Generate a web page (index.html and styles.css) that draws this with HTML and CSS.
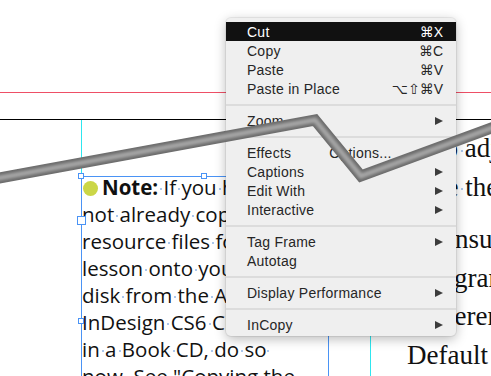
FILE: index.html
```html
<!DOCTYPE html>
<html lang="en">
<head>
    <meta charset="UTF-8">
    <meta name="viewport" content="width=device-width, initial-scale=1.0">
    <title>Layout - Context Menu</title>
    <link rel="stylesheet" href="styles.css">
</head>
<body>
    <div class="page">
        <div class="guide guide-bleed"></div>
        <div class="guide guide-margin"></div>
        <div class="guide guide-col-a"></div>
        <div class="guide guide-col-b"></div>

        <div class="frame note-frame">
            <div class="story">
                <div><span class="bullet"></span><b>Note:</b><span class="sp"> </span>If<span class="sp"> </span>you<span class="sp"> </span>have</div>
                <div>not<span class="sp"> </span>already<span class="sp"> </span>copied<span class="sp"> </span>the</div>
                <div>resource<span class="sp"> </span>files<span class="sp"> </span>for<span class="sp"> </span>this</div>
                <div>lesson<span class="sp"> </span>onto<span class="sp"> </span>your<span class="sp"> </span>hard</div>
                <div>disk<span class="sp"> </span>from<span class="sp"> </span>the<span class="sp"> </span>Adobe</div>
                <div>InDesign<span class="sp"> </span>CS6<span class="sp"> </span>Classroom</div>
                <div>in<span class="sp"> </span>a<span class="sp"> </span>Book<span class="sp"> </span>CD,<span class="sp"> </span>do<span class="sp"> </span>so<span class="sp"> </span></div>
                <div>now.<span class="sp"> </span>See<span class="sp"> </span>"Copying<span class="sp"> </span>the</div>
            </div>
            <span class="handle h-tl"></span>
            <span class="handle h-tm"></span>
            <span class="handle big h-ml"></span>
            <span class="handle h-bl"></span>
        </div>

        <div class="body-col">
            <div class="line r1">to<span class="sp"> </span>adjust</div>
            <div class="line r2">see<span class="sp"> </span>the</div>
            <div class="line r3 para">ensure</div>
            <div class="line r4">program</div>
            <div class="line r5">preferences</div>
            <div class="line r6">Default<span class="sp"> </span>file</div>
        </div>

        <ul class="menu">
            <li class="item active"><span>Cut</span><span class="key">⌘X</span></li>
            <li class="item"><span>Copy</span><span class="key">⌘C</span></li>
            <li class="item"><span>Paste</span><span class="key">⌘V</span></li>
            <li class="item"><span>Paste in Place</span><span class="key">⌥⇧⌘V</span></li>
            <li class="sep"></li>
            <li class="item"><span>Zoom</span><span class="sub"></span></li>
            <li class="sep"></li>
            <li class="item"><span>Effects</span><span class="ghost">Options...</span></li>
            <li class="item"><span>Captions</span><span class="sub"></span></li>
            <li class="item"><span>Edit With</span><span class="sub"></span></li>
            <li class="item"><span>Interactive</span><span class="sub"></span></li>
            <li class="sep"></li>
            <li class="item"><span>Tag Frame</span><span class="sub"></span></li>
            <li class="item"><span>Autotag</span></li>
            <li class="sep"></li>
            <li class="item"><span>Display Performance</span><span class="sub"></span></li>
            <li class="sep"></li>
            <li class="item"><span>InCopy</span><span class="sub"></span></li>
        </ul>

        <svg class="pen-path" width="491" height="376" viewBox="0 0 491 376">
            <defs>
                <filter id="soft" x="-10%" y="-10%" width="120%" height="120%">
                    <feGaussianBlur stdDeviation="1.6"/>
                </filter>
            </defs>
            <polyline points="-6,179 315,120 361,176 497,126" fill="none" stroke="#6c6c6c" stroke-width="11" stroke-linejoin="miter" stroke-miterlimit="10"/>
            <polyline points="-6,179 315,120 361,176 497,126" fill="none" stroke="#a6a6a6" stroke-width="5" stroke-linejoin="miter" stroke-miterlimit="10" filter="url(#soft)"/>
        </svg>
    </div>
</body>
</html>
```

FILE: styles.css
```css
* {
    box-sizing: border-box;
}
body {
    margin: 0;
    background-color: #fff;
    overflow: hidden;
}
.page {
    position: relative;
    width: 491px;
    height: 376px;
    overflow: hidden;
}

/* guides on the spread */
.guide {
    position: absolute;
}
.guide-bleed {
    left: 0;
    right: 0;
    top: 92px;
    height: 1px;
    background-color: #ee4f66;
}
.guide-margin {
    left: 0;
    right: 0;
    top: 119px;
    height: 1px;
    background-color: #000;
}
.guide-col-a {
    left: 81px;
    top: 120px;
    height: 56px;
    width: 1px;
    background-color: #2ee6ef;
}
.guide-col-b {
    left: 370px;
    top: 120px;
    bottom: 0;
    width: 1px;
    background-color: #2ee6ef;
}

/* selected text frame */
.frame {
    position: absolute;
    left: 81px;
    top: 176px;
    width: 248px;
    height: 240px;
    border: 1px solid #4a93f5;
    border-bottom: none;
}
.story {
    margin-top: -3px;
    font-family: "Open Sans", "Liberation Sans", sans-serif;
    font-size: 20.5px;
    line-height: 27px;
    color: #111;
    white-space: nowrap;
}
.story b {
    font-weight: bold;
}
.bullet {
    display: inline-block;
    width: 15px;
    height: 15px;
    margin: 0 4px 0 1px;
    border-radius: 50%;
    background-color: #cbd647;
    vertical-align: -1px;
}
.sp {
    position: relative;
}
.sp::after {
    content: "";
    position: absolute;
    left: 40%;
    top: 55%;
    width: 2px;
    height: 2px;
    border-radius: 1px;
    background-color: #8fb4e6;
}
.handle {
    position: absolute;
    width: 6px;
    height: 6px;
    background-color: #fff;
    border: 1px solid #4a93f5;
}
.handle.big {
    width: 9px;
    height: 9px;
}
.h-tl { left: -4px; top: -4px; }
.h-tm { left: 119px; top: -4px; }
.h-ml { left: -5px; top: 39px; }
.h-bl { left: -4px; top: 141px; }

/* column of body text behind the menu */
.body-col {
    position: absolute;
    left: 405px;
    top: 129px;
    font-family: "Liberation Serif", "Times New Roman", serif;
    font-size: 27px;
    line-height: 38.5px;
    color: #111;
    white-space: nowrap;
}
.body-col .para {
    margin-top: 14px;
}
.r1 { padding-left: 32px; }
.r2 { padding-left: 19px; }
.r3 { padding-left: 38px; }
.r4 { padding-left: 13px; }
.r5 { padding-left: 6px; }
.r6 { padding-left: 2px; }

/* context menu */
.menu {
    position: absolute;
    left: 226px;
    top: 18px;
    width: 230px;
    margin: 0;
    padding: 4px 0 2px;
    list-style: none;
    background-color: #efefef;
    border-radius: 5px;
    box-shadow: 0 3px 12px rgba(0, 0, 0, 0.28), 0 0 0 1px rgba(0, 0, 0, 0.06);
    font-family: "Liberation Sans", Arial, sans-serif;
    font-size: 14px;
    letter-spacing: 0.25px;
    color: #262626;
}
.item {
    display: flex;
    align-items: center;
    height: 19px;
    padding: 0 13px 0 21px;
}
.item.active {
    background-color: #111;
    color: #fff;
}
.key {
    margin-left: auto;
    font-family: "Liberation Sans", "DejaVu Sans", sans-serif;
    letter-spacing: 0;
}
.sub {
    margin-left: auto;
    width: 0;
    height: 0;
    border-left: 8px solid #3c3c3c;
    border-top: 4.5px solid transparent;
    border-bottom: 4.5px solid transparent;
}
.ghost {
    margin-left: 38px;
}
.sep {
    height: 2px;
    margin: 6px 0 5px;
    background-color: #dcdcdc;
}

/* pen path drawn over everything */
.pen-path {
    position: absolute;
    left: 0;
    top: 0;
    pointer-events: none;
}
```
